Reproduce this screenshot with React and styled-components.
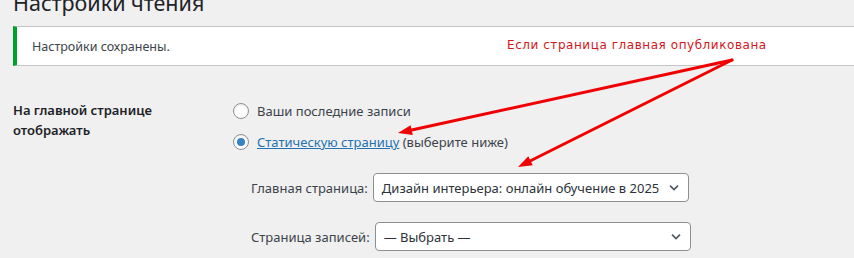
import React from 'react';
import styled, { createGlobalStyle } from 'styled-components';

const GlobalStyle = createGlobalStyle`
  html, body {
    margin: 0;
    padding: 0;
    background: #f0f0f1;
    overflow: hidden;
  }
  body {
    font-family: 'Noto Sans', 'Open Sans', sans-serif;
    color: #1d2327;
    font-size: 13px;
  }
`;

const Wrap = styled.div`
  position: relative;
  width: 854px;
  height: 258px;
  overflow: hidden;
  padding-left: 13px;
  box-sizing: border-box;
`;

const Title = styled.h1`
  margin: -11px 0 0;
  font-size: 21.5px;
  font-weight: 400;
  line-height: 28px;
  color: #1d2327;
`;

const Notice = styled.div`
  margin-top: 9px;
  height: 40px;
  box-sizing: border-box;
  background: #fff;
  border: 1px solid #c3c4c7;
  border-left: 4px solid #00a32a;
  border-right: none;
  display: flex;
  align-items: center;
  padding-left: 15px;
  font-size: 12.5px;
  color: #3c434a;
  margin-right: -20px;
`;

const FormTable = styled.div`
  display: grid;
  grid-template-columns: 220px 1fr;
  margin-top: 34px;
`;

const RowLabel = styled.div`
  font-weight: 600;
  font-size: 13px;
  line-height: 20px;
  color: #1d2327;
`;

const Options = styled.div`
  display: flex;
  flex-direction: column;
  gap: 11px;
  padding-top: 1px;
`;

const RadioRow = styled.label`
  display: flex;
  align-items: center;
  gap: 8px;
  height: 20px;
  line-height: 20px;
  color: #3c434a;
`;

const Radio = styled.span`
  flex: none;
  width: 16px;
  height: 16px;
  box-sizing: border-box;
  border-radius: 50%;
  border: 1px solid #8c8f94;
  background: #fff;
  box-shadow: inset 0 1px 2px rgba(0, 0, 0, 0.1);
  display: flex;
  align-items: center;
  justify-content: center;
  &::before {
    content: '';
    width: 8px;
    height: 8px;
    border-radius: 50%;
    background: #3582c4;
    display: ${p => (p.checked ? 'block' : 'none')};
  }
`;

const Link = styled.a`
  color: #2271b1;
  text-decoration: underline;
`;

const SubFields = styled.div`
  display: flex;
  flex-direction: column;
  gap: 20px;
  margin: 21px 0 0 18px;
`;

const FieldRow = styled.div`
  display: flex;
  align-items: center;
  gap: 5px;
  color: #3c434a;
`;

const SelectBox = styled.div`
  flex: none;
  width: ${p => p.width}px;
  height: 29px;
  box-sizing: border-box;
  border: 1px solid #8c8f94;
  border-radius: 4px;
  background: #fff;
  display: flex;
  align-items: center;
  justify-content: space-between;
  padding: 0 6px 0 8px;
  color: #2c3338;
  font-size: 13px;
  white-space: nowrap;
`;

const Annotation = styled.div`
  position: absolute;
  left: 0;
  top: 0;
  width: 854px;
  height: 258px;
  pointer-events: none;
`;

const AnnotationText = styled.span`
  position: absolute;
  left: 507px;
  top: 38px;
  font-family: 'DejaVu Sans', sans-serif;
  font-size: 12px;
  letter-spacing: 0.55px;
  color: #d4161c;
`;

const Chevron = () => (
  <svg width="16" height="16" viewBox="0 0 20 20">
    <path d="M5 7l5 5 5-5" fill="none" stroke="#50575e" strokeWidth="2" />
  </svg>
);

const Arrow = ({ x1, y1, x2, y2 }) => {
  const a = Math.atan2(y2 - y1, x2 - x1);
  const len = 14;
  const w = 5;
  const bx = x2 - len * Math.cos(a);
  const by = y2 - len * Math.sin(a);
  const px = -Math.sin(a) * w;
  const py = Math.cos(a) * w;
  return (
    <g>
      <line x1={x1} y1={y1} x2={bx} y2={by} stroke="#f00000" strokeWidth="3" strokeLinecap="round" />
      <polygon points={`${x2},${y2} ${bx + px},${by + py} ${bx - px},${by - py}`} fill="#f00000" />
    </g>
  );
};

export default function App() {
  return (
    <>
      <GlobalStyle />
      <Wrap>
        <Title>Настройки чтения</Title>
        <Notice>Настройки сохранены.</Notice>
        <FormTable>
          <RowLabel>
            На главной странице
            <br />
            отображать
          </RowLabel>
          <div>
            <Options>
              <RadioRow>
                <Radio />
                Ваши последние записи
              </RadioRow>
              <RadioRow>
                <Radio checked />
                <span>
                  <Link href="#">Статическую страницу</Link> (выберите ниже)
                </span>
              </RadioRow>
            </Options>
            <SubFields>
              <FieldRow>
                Главная страница:
                <SelectBox width={316}>
                  <span>Дизайн интерьера: онлайн обучение в 2025</span>
                  <Chevron />
                </SelectBox>
              </FieldRow>
              <FieldRow>
                Страница записей:
                <SelectBox width={316}>
                  <span>— Выбрать —</span>
                  <Chevron />
                </SelectBox>
              </FieldRow>
            </SubFields>
          </div>
        </FormTable>
        <Annotation>
          <AnnotationText>Если страница главная опубликована</AnnotationText>
          <svg width="854" height="258" style={{ position: 'absolute', left: 0, top: 0 }}>
            <Arrow x1={732} y1={60} x2={398} y2={133} />
            <Arrow x1={732} y1={60} x2={518} y2={167} />
          </svg>
        </Annotation>
      </Wrap>
    </>
  );
}
